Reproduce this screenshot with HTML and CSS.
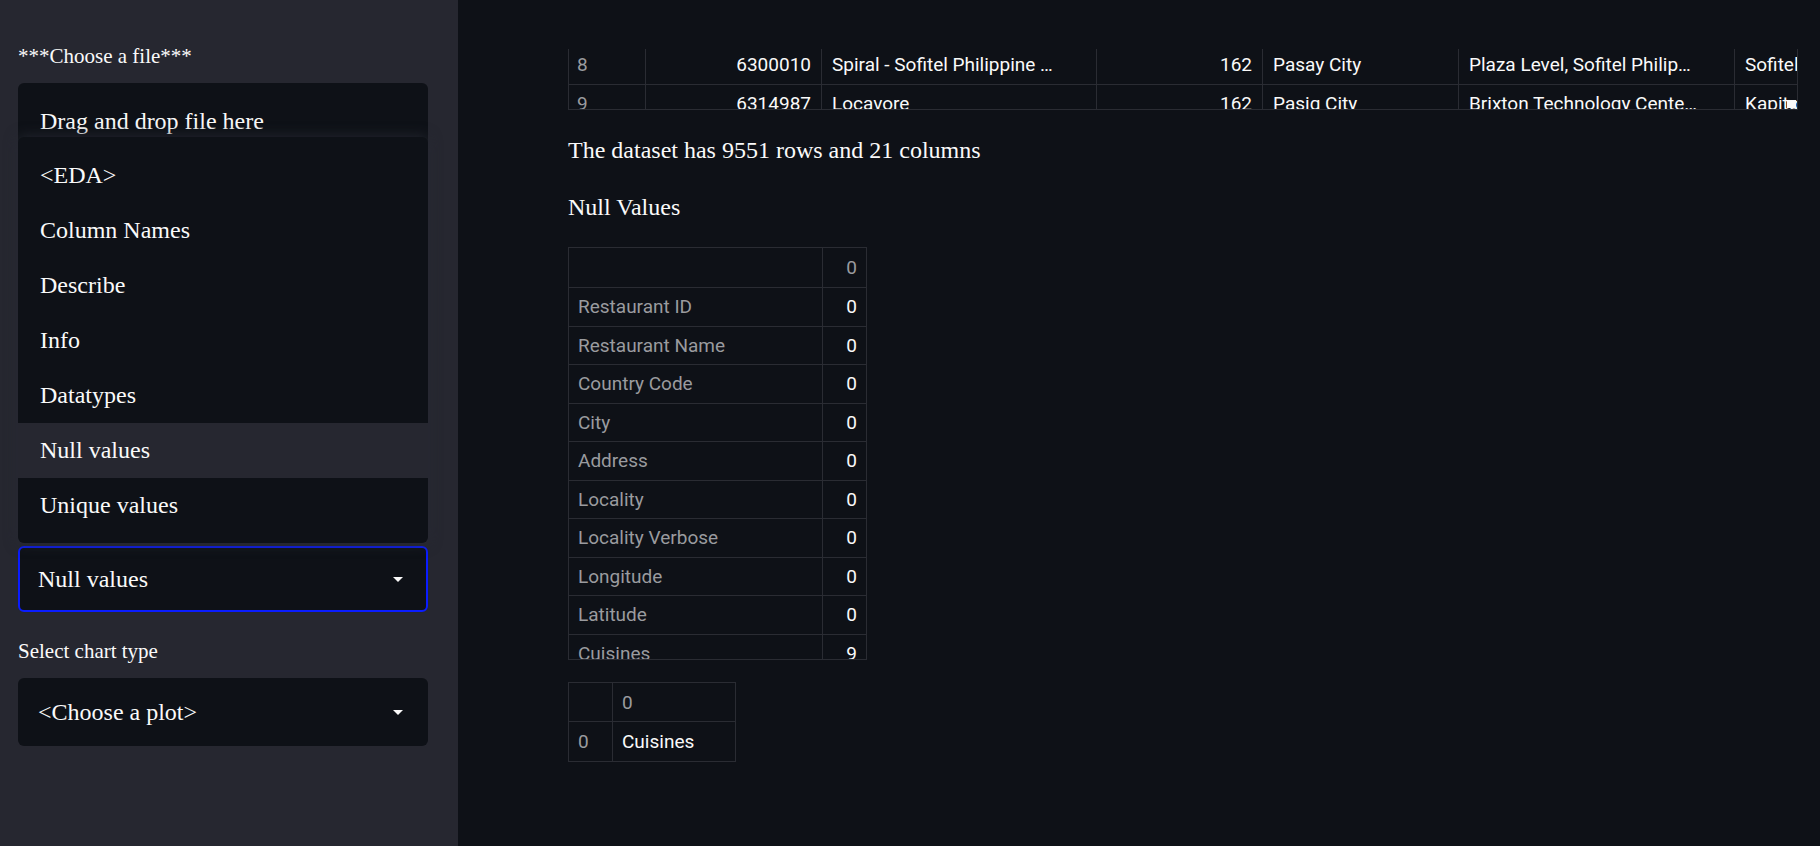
FILE: index.html
```html
<!DOCTYPE html>
<html>
<head>
<meta charset="utf-8">
<link rel="stylesheet" href="styles.css">
</head>
<body>
<div class="app">
  <aside class="sidebar">
    <div class="label">***Choose a file***</div>
    <div class="uploader">
      <div class="upl-text">Drag and drop file here</div>
    </div>
    <div class="select-wrap">
      <div class="popover">
        <div class="option">&lt;EDA&gt;</div>
        <div class="option">Column Names</div>
        <div class="option">Describe</div>
        <div class="option">Info</div>
        <div class="option">Datatypes</div>
        <div class="option active">Null values</div>
        <div class="option">Unique values</div>
      </div>
      <div class="select focused"><span>Null values</span><span class="caret"></span></div>
    </div>
    <div class="label label2">Select chart type</div>
    <div class="select plain"><span>&lt;Choose a plot&gt;</span><span class="caret"></span></div>
  </aside>
  <main class="main">
    <div class="top-table">
      <div class="rows">
        <div class="trow">
          <div class="c c1 idx">8</div>
          <div class="c c2 num">6300010</div>
          <div class="c c3">Spiral - Sofitel Philippine …</div>
          <div class="c c4 num">162</div>
          <div class="c c5">Pasay City</div>
          <div class="c c6">Plaza Level, Sofitel Philip…</div>
          <div class="c c7">Sofitel Philippine Plaza Manila</div>
        </div>
        <div class="trow">
          <div class="c c1 idx">9</div>
          <div class="c c2 num">6314987</div>
          <div class="c c3">Locavore</div>
          <div class="c c4 num">162</div>
          <div class="c c5">Pasig City</div>
          <div class="c c6">Brixton Technology Cente…</div>
          <div class="c c7">Kapitolyo</div>
        </div>
      </div>
      <div class="scroll-corner"></div>
    </div>

    <p class="text first">The dataset has 9551 rows and 21 columns</p>
    <p class="text">Null Values</p>

    <div class="null-table">
      <div class="nrow head"><div class="nc lab"></div><div class="nc val grey">0</div></div>
      <div class="nrow"><div class="nc lab grey">Restaurant ID</div><div class="nc val">0</div></div>
      <div class="nrow"><div class="nc lab grey">Restaurant Name</div><div class="nc val">0</div></div>
      <div class="nrow"><div class="nc lab grey">Country Code</div><div class="nc val">0</div></div>
      <div class="nrow"><div class="nc lab grey">City</div><div class="nc val">0</div></div>
      <div class="nrow"><div class="nc lab grey">Address</div><div class="nc val">0</div></div>
      <div class="nrow"><div class="nc lab grey">Locality</div><div class="nc val">0</div></div>
      <div class="nrow"><div class="nc lab grey">Locality Verbose</div><div class="nc val">0</div></div>
      <div class="nrow"><div class="nc lab grey">Longitude</div><div class="nc val">0</div></div>
      <div class="nrow"><div class="nc lab grey">Latitude</div><div class="nc val">0</div></div>
      <div class="nrow"><div class="nc lab grey">Cuisines</div><div class="nc val">9</div></div>
    </div>

    <div class="small-table">
      <div class="srow head"><div class="sc s1"></div><div class="sc s2 grey">0</div></div>
      <div class="srow"><div class="sc s1 grey">0</div><div class="sc s2">Cuisines</div></div>
    </div>
  </main>
</div>
</body>
</html>
```

FILE: styles.css
```css
html, body {
  margin: 0;
  padding: 0;
}

body {
  background: #0e1117;
  color: #fafafa;
  font-family: "Liberation Serif", "Times New Roman", serif;
}

.app {
  display: flex;
  height: 846px;
  overflow: hidden;
}

/* ---------- sidebar ---------- */
.sidebar {
  width: 458px;
  flex: none;
  box-sizing: border-box;
  background: #262730;
  padding: 42px 30px 0 18px;
}

.label {
  font-size: 21px;
  line-height: 28px;
  color: #fafafa;
}

.label2 {
  margin-top: 25px;
}

.uploader {
  margin-top: 13px;
  height: 447px;
  box-sizing: border-box;
  background: #0e1117;
  border-radius: 6px;
  padding: 20px 22px;
}

.upl-text {
  font-size: 24px;
  line-height: 36px;
}

.select-wrap {
  position: relative;
  margin-top: 16px;
}

.popover {
  position: absolute;
  left: 0;
  right: 0;
  bottom: calc(100% + 3px);
  background: #0e1117;
  border-radius: 6px;
  padding: 11px 0 10px;
  box-shadow: 0 0 14px rgba(40, 42, 52, 0.9);
  z-index: 2;
}

.option {
  height: 55px;
  display: flex;
  align-items: center;
  padding-left: 22px;
  font-size: 24px;
}

.option.active {
  background: #262730;
}

.select {
  height: 66px;
  box-sizing: border-box;
  border: 2px solid transparent;
  border-radius: 6px;
  background: #0e1117;
  display: flex;
  align-items: center;
  justify-content: space-between;
  padding: 0 23px 0 18px;
  font-size: 24px;
}

.select.focused {
  border-color: #0a1cff;
}

.select.plain {
  height: 68px;
  margin-top: 13px;
}

.caret {
  width: 0;
  height: 0;
  border-left: 5px solid transparent;
  border-right: 5px solid transparent;
  border-top: 5px solid #fafafa;
}

/* ---------- main ---------- */
.main {
  flex: 1;
  padding: 49px 0 0 110px;
  font-family: Roboto, "Liberation Sans", sans-serif;
}

.grey {
  color: #9a9b9f;
}

.top-table {
  position: relative;
  width: 1230px;
  height: 61px;
  box-sizing: border-box;
  border: 1px solid #2a2c33;
  border-top: none;
  overflow: hidden;
}

.rows {
  margin-top: -3px;
}

.trow {
  display: flex;
  height: 38.5px;
  box-sizing: border-box;
  border-bottom: 1px solid #2a2c33;
  font-size: 19px;
  white-space: nowrap;
}

.c {
  flex: none;
  box-sizing: border-box;
  display: flex;
  align-items: center;
  padding: 0 10px;
  border-right: 1px solid #2a2c33;
  overflow: hidden;
}

.c.num {
  justify-content: flex-end;
}

.c.idx {
  color: #9a9b9f;
  padding-left: 8px;
}

.c1 { width: 77px; }
.c2 { width: 176px; }
.c3 { width: 275px; }
.c4 { width: 166px; }
.c5 { width: 196px; }
.c6 { width: 276px; }
.c7 { width: 300px; }

.scroll-corner {
  position: absolute;
  right: 1px;
  bottom: 1px;
  width: 9px;
  height: 8px;
  background: #fafafa;
}

.text {
  margin: 21px 0 0;
  font-family: "Liberation Serif", "Times New Roman", serif;
  font-size: 24px;
  line-height: 36px;
}

.text.first {
  margin-top: 22px;
}

.null-table {
  margin-top: 22px;
  width: 299px;
  height: 413px;
  box-sizing: border-box;
  border: 1px solid #2a2c33;
  overflow: hidden;
  font-size: 19px;
}

.nrow {
  display: flex;
  height: 38.5px;
  box-sizing: border-box;
  border-bottom: 1px solid #2a2c33;
}

.nrow.head {
  height: 40px;
}

.nc {
  box-sizing: border-box;
  display: flex;
  align-items: center;
  white-space: nowrap;
}

.nc.lab {
  width: 254px;
  padding-left: 9px;
  border-right: 1px solid #2a2c33;
}

.nc.val {
  width: 43px;
  justify-content: flex-end;
  padding-right: 9px;
}

.small-table {
  margin-top: 22px;
  width: 168px;
  box-sizing: border-box;
  border: 1px solid #2a2c33;
  font-size: 19px;
}

.srow {
  display: flex;
  height: 39px;
  box-sizing: border-box;
}

.srow.head {
  border-bottom: 1px solid #2a2c33;
}

.sc {
  box-sizing: border-box;
  display: flex;
  align-items: center;
  padding-left: 9px;
}

.sc.s1 {
  width: 44px;
  border-right: 1px solid #2a2c33;
}

.sc.s2 {
  width: 122px;
}
```
